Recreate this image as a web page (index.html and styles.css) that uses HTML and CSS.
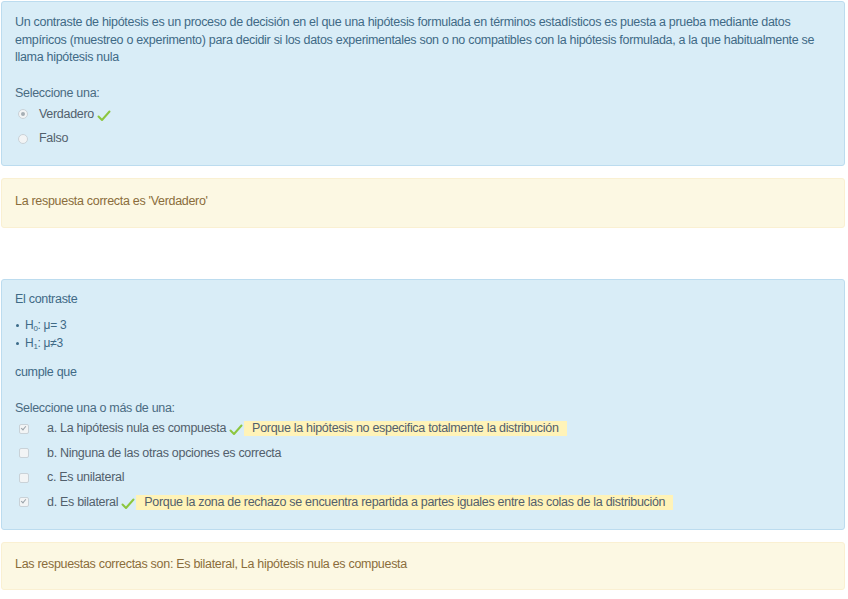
FILE: index.html
```html
<!DOCTYPE html>
<html lang="es">
<head>
<meta charset="utf-8">
<link rel="stylesheet" href="styles.css">
</head>
<body>
<div class="page">
  <div class="box info q1">
    <p class="qtext">Un contraste de hipótesis es un proceso de decisión en el que una hipótesis formulada en términos estadísticos es puesta a prueba mediante datos empíricos (muestreo o experimento) para decidir si los datos experimentales son o no compatibles con la hipótesis formulada, a la que habitualmente se llama hipótesis nula</p>
    <div class="prompt">Seleccione una:</div>
    <div class="opts">
      <div class="opt"><span class="radio checked"></span><span class="lbl">Verdadero</span><svg class="tick" viewBox="0 0 14 12" width="14" height="12"><path d="M1.5 6.5 L5 10 L12.5 1.5" fill="none" stroke="#8cc63f" stroke-width="2" stroke-linecap="round" stroke-linejoin="round"/></svg></div>
      <div class="opt"><span class="radio"></span><span class="lbl">Falso</span></div>
    </div>
  </div>
  <div class="box warn fb1">La respuesta correcta es 'Verdadero'</div>

  <div class="box info q2">
    <p class="qtext">El contraste</p>
    <ul class="hyp">
      <li>H<sub>0</sub>: μ= 3</li>
      <li>H<sub>1</sub>: μ≠3</li>
    </ul>
    <p class="qtext">cumple que</p>
    <div class="prompt">Seleccione una o más de una:</div>
    <div class="opts multi">
      <div class="opt"><span class="chk checked"></span><span class="lbl">a. La hipótesis nula es compuesta</span><svg class="tick" viewBox="0 0 14 12" width="14" height="12"><path d="M1.5 6.5 L5 10 L12.5 1.5" fill="none" stroke="#8cc63f" stroke-width="2" stroke-linecap="round" stroke-linejoin="round"/></svg><span class="spec">Porque la hipótesis no especifica totalmente la distribución</span></div>
      <div class="opt"><span class="chk"></span><span class="lbl">b. Ninguna de las otras opciones es correcta</span></div>
      <div class="opt"><span class="chk"></span><span class="lbl">c. Es unilateral</span></div>
      <div class="opt"><span class="chk checked"></span><span class="lbl">d. Es bilateral</span><svg class="tick" viewBox="0 0 14 12" width="14" height="12"><path d="M1.5 6.5 L5 10 L12.5 1.5" fill="none" stroke="#8cc63f" stroke-width="2" stroke-linecap="round" stroke-linejoin="round"/></svg><span class="spec">Porque la zona de rechazo se encuentra repartida a partes iguales entre las colas de la distribución</span></div>
    </div>
  </div>
  <div class="box warn fb2">Las respuestas correctas son: Es bilateral, La hipótesis nula es compuesta</div>
</div>
</body>
</html>
```
FILE: styles.css
```css
html, body {
  margin: 0;
  padding: 0;
  background: #fff;
}
body {
  font-family: "Liberation Sans", Arial, sans-serif;
  font-size: 12.5px;
  line-height: 17.5px;
  letter-spacing: -0.3px;
}
.page {
  padding: 1px 3px 0 1px;
  display: flex;
  flex-direction: column;
}
.box {
  border-radius: 3px;
  border: 1px solid;
}
.info {
  background: #d9edf7;
  border-color: #bcdcef;
  color: #3f6a86;
}
.warn {
  background: #fcf8e3;
  border-color: #faf0d2;
  color: #8a6d3b;
}
.q1 {
  padding: 12px 13px 16px 13px;
  height: 135px;
}
.qtext {
  margin: 0;
}
.prompt {
  margin-top: 18px;
  color: #4a6b82;
}
.opts {
  display: flex;
  flex-direction: column;
}
.opt {
  display: flex;
  align-items: center;
  height: 24.5px;
  color: #52606c;
}
.radio {
  width: 8px;
  height: 8px;
  border-radius: 50%;
  border: 1px solid #c9d2d8;
  background: #f2f4f5;
  margin-left: 3px;
  margin-right: 11px;
  box-sizing: content-box;
  position: relative;
}
.radio.checked::after {
  content: "";
  position: absolute;
  left: 2px;
  top: 2px;
  width: 4px;
  height: 4px;
  border-radius: 50%;
  background: #a6aeb4;
}
.tick {
  margin-left: 3px;
  margin-top: 3px;
}
.fb1 {
  margin-top: 12px;
  padding: 14px 13px;
  height: 20px;
}
.q2 {
  margin-top: 51px;
  padding: 11px 13px 14px 13px;
  height: 224px;
}
.hyp {
  margin: 7px 0 12px 0;
  padding: 0 0 0 10px;
  list-style: none;
}
.hyp li {
  position: relative;
  line-height: 18px;
  font-size: 12px;
}
.hyp li::before {
  content: "";
  position: absolute;
  left: -9px;
  top: 8px;
  width: 3px;
  height: 3px;
  border-radius: 50%;
  background: #3b6b89;
}
.hyp sub {
  font-size: 8px;
  vertical-align: -2px;
  line-height: 0;
}
.q2 .prompt {
  margin-top: 19px;
}
.multi {
  margin-top: -1px;
}
.multi .opt {
  height: 24.5px;
}
.chk {
  width: 8px;
  height: 8px;
  border: 1px solid #c9d2d8;
  border-radius: 2px;
  background: #f2f4f5;
  margin-left: 4px;
  margin-right: 18px;
  position: relative;
}
.chk.checked::after {
  content: "";
  position: absolute;
  left: 2px;
  top: 0px;
  width: 2px;
  height: 4px;
  border: solid #9aa3aa;
  border-width: 0 1px 1px 0;
  transform: rotate(40deg);
}
.spec {
  background: #fff3b8;
  padding: 0 8px 0 8px;
  margin-left: 1px;
  line-height: 15px;
  color: #52606c;
}
.fb2 {
  margin-top: 12px;
  padding: 13px 13px;
  height: 20px;
}
```
